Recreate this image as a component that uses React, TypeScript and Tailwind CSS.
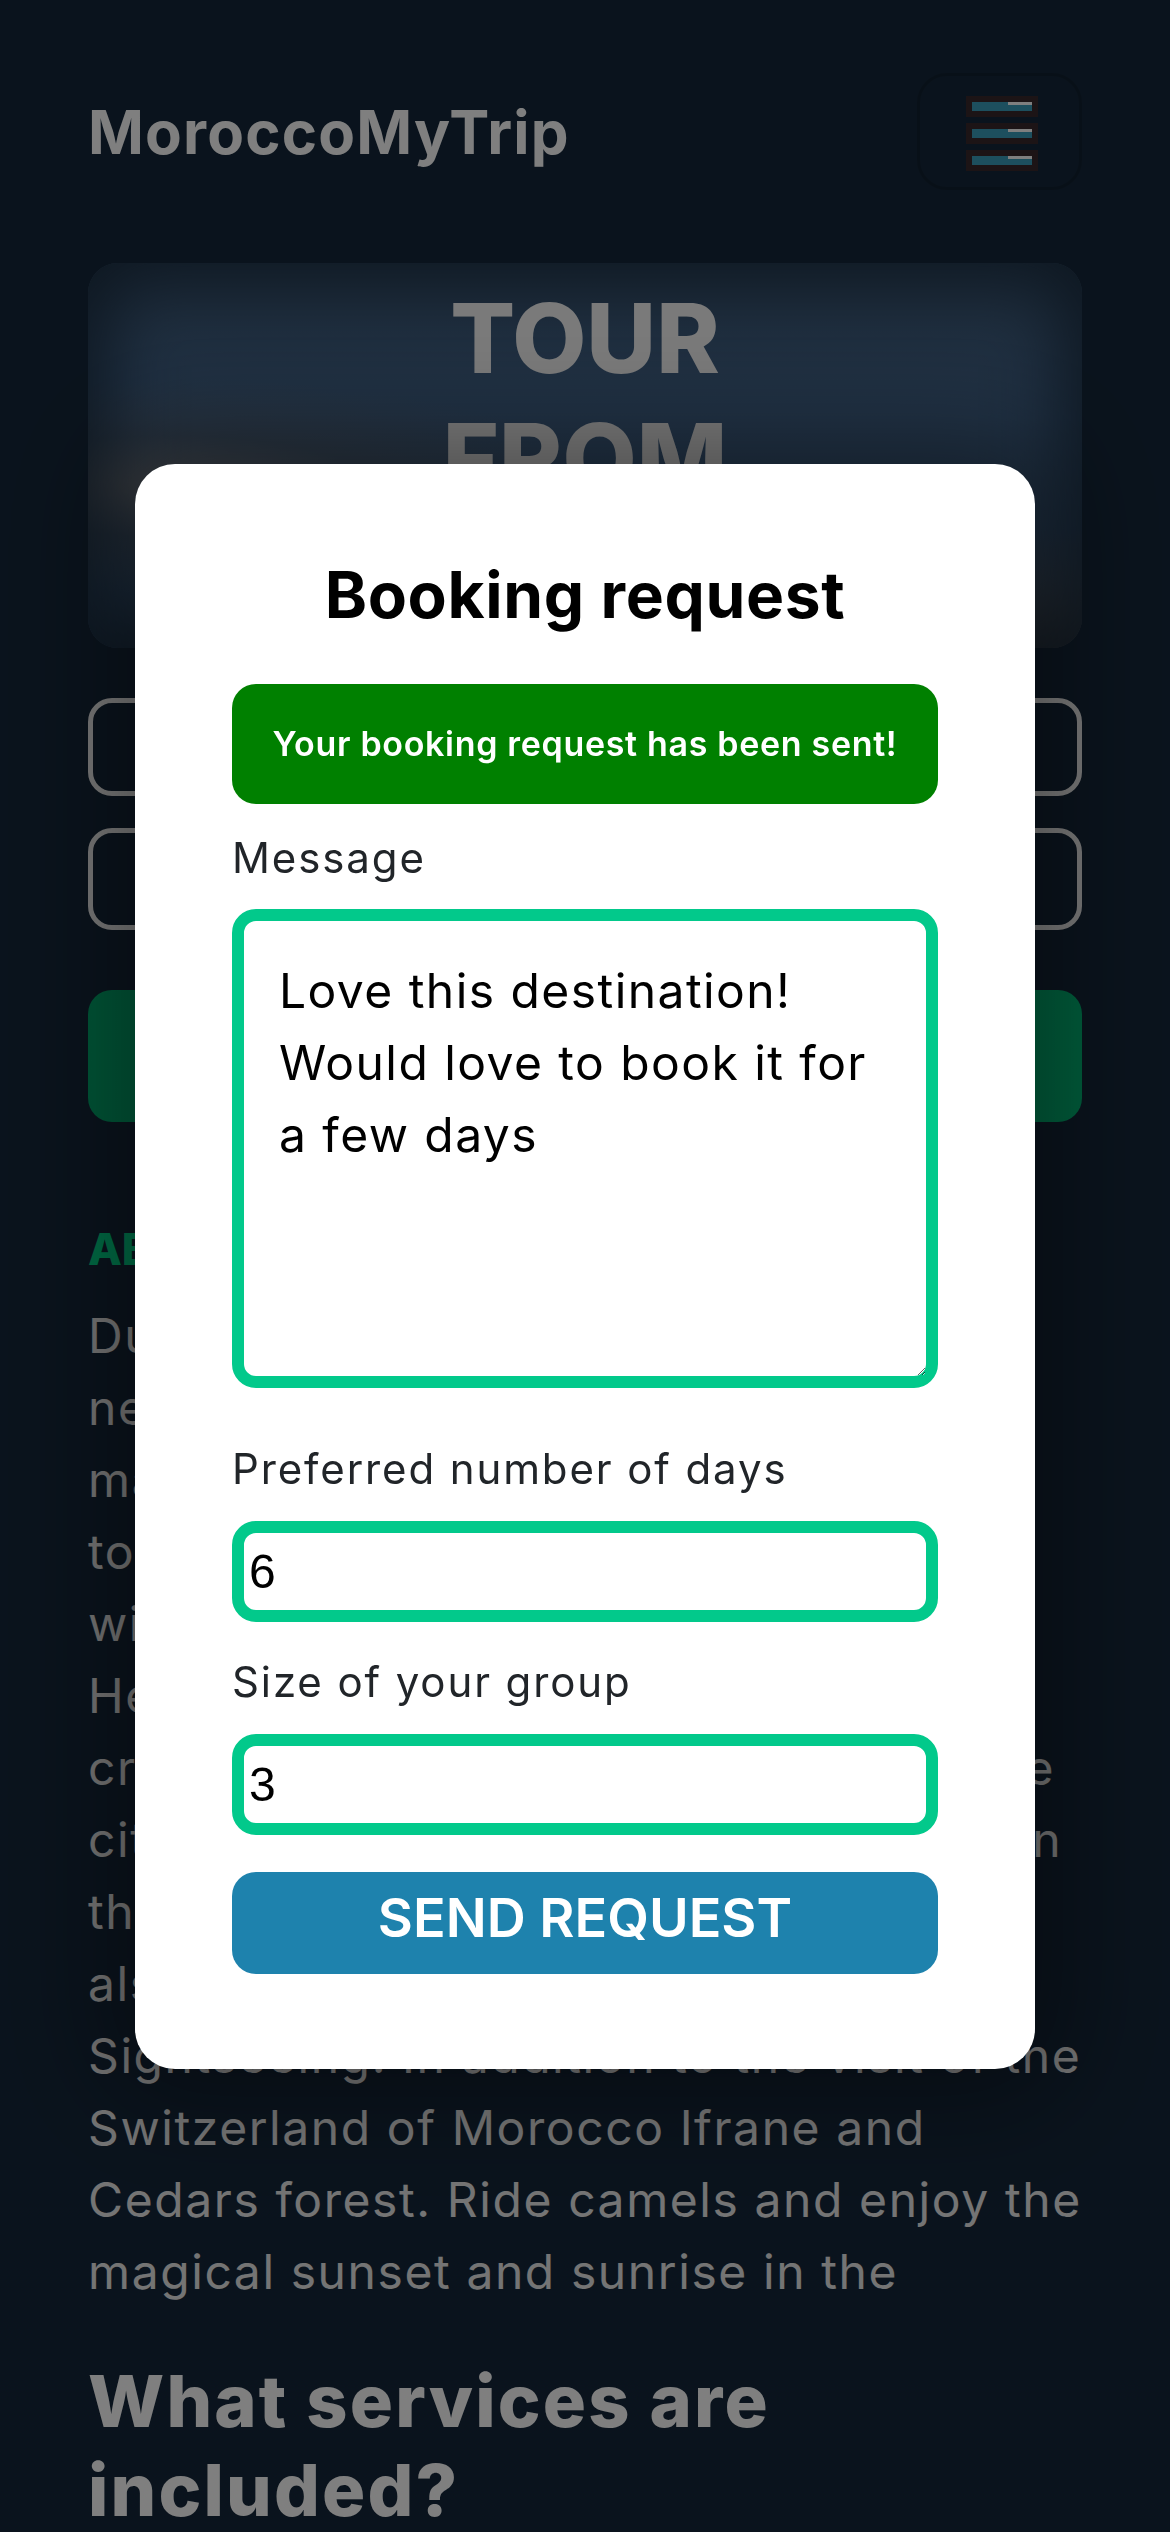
import { useState } from "react";

const aboutLines = [
  "During this 4 days tour from Fes to the",
  "new Marrakech, you will discover the",
  "magnificent dunes of Merzouga, and",
  "to spend a night in a Berber camp",
  "with a memorable starry sky.",
  "Head to Ouarzazate and the Atlas",
  "crossing road via Todra Gorges, see the",
  "city of Ait Ben Haddou and its Kasbah in",
  "the valley of the roses. You will",
  "also enjoy the desert and Marrakech",
  "Sightseeing. In addition to the visit of the",
  "Switzerland of Morocco Ifrane and",
  "Cedars forest. Ride camels and enjoy the",
  "magical sunset and sunrise in the",
];

function MenuIcon() {
  return (
    <svg width="72" height="75" viewBox="0 0 72 75">
      {[0, 27, 54].map((y) => (
        <g key={y}>
          <rect x="0" y={y} width="72" height="21" fill="#38282c" />
          <rect x="6" y={y + 6} width="60" height="9" fill="#3a9ebc" />
          <rect x="42" y={y + 6} width="24" height="3" fill="#ffffff" />
        </g>
      ))}
    </svg>
  );
}

export default function App() {
  const [message, setMessage] = useState("Love this destination! Would love to book it for a few days");
  const [days, setDays] = useState("6");
  const [group, setGroup] = useState("3");

  return (
    <div className="min-h-screen bg-[#15273a] font-['Inter',sans-serif] text-white">
      <div className="px-[88px]">
        {/* Header */}
        <header className="flex items-center justify-between pt-[73px]">
          <span className="text-[60px] leading-[72px] font-bold tracking-[0.02em]">MoroccoMyTrip</span>
          <button className="w-[165px] h-[117px] rounded-[30px] border-[3px] border-black/15 flex items-center justify-center pl-[5px] pt-[4px]">
            <MenuIcon />
          </button>
        </header>

        {/* Hero */}
        <section className="mt-[73px] h-[385px] rounded-[30px] overflow-hidden bg-[radial-gradient(ellipse_at_8%_58%,#7c828b_0%,rgba(90,100,112,0.5)_16%,transparent_34%),radial-gradient(ellipse_at_100%_100%,#5a5d63_0%,transparent_22%),linear-gradient(180deg,#3c5876_0%,#42648a_40%,#3a5878_100%)] shadow-[inset_0_0_70px_20px_rgba(22,40,58,0.85)]">
          <h1 className="mx-auto w-[330px] pt-[15px] text-center text-[96px] leading-[120px] font-extrabold text-[#f5f5f5]">
            TOUR FROM FES TO MARRAKECH
          </h1>
        </section>

        {/* Booking form behind the dialog */}
        <div className="mt-[50px] h-[98px] rounded-[24px] border-[5px] border-[#f2f2f2]" />
        <div className="mt-[32px] h-[102px] rounded-[24px] border-[5px] border-[#f2f2f2]" />
        <div className="mt-[60px] h-[132px] rounded-[24px] bg-[linear-gradient(90deg,#00aa6e,#00b876)]" />

        {/* About */}
        <h2 className="mt-[97px] text-[44px] leading-[60px] font-extrabold text-[#00d68a]">ABOUT THIS TOUR</h2>
        <p className="mt-[21px] text-[48px] leading-[72px] tracking-[0.033em] text-[#e9e9e9]">
          {aboutLines.map((line) => (
            <span key={line} className="block whitespace-nowrap">
              {line}
            </span>
          ))}
        </p>

        <h2 className="mt-[48px] max-w-[820px] text-[72px] leading-[89px] font-extrabold tracking-[0.03em] text-white">
          What services are included?
        </h2>
      </div>

      {/* Dialog */}
      <div className="fixed inset-0 bg-black/50 flex items-center justify-center">
        <div className="w-[900px] bg-white rounded-[40px] px-[97px] pt-[93px] pb-[95px] shadow-[0_0_100px_30px_rgba(0,0,0,0.35)]">
          <h3 className="text-center text-[64px] leading-[76px] font-bold tracking-[0.01em] text-black">Booking request</h3>

          <div className="mt-[51px] h-[120px] rounded-[24px] bg-[#008000] flex items-center justify-center">
            <span className="text-[34px] font-semibold tracking-[0.02em] text-white">Your booking request has been sent!</span>
          </div>

          <label className="block mt-[24px] text-[42px] leading-[60px] tracking-[0.045em] text-[#212529]">Message</label>
          <textarea
            value={message}
            onChange={(e) => setMessage(e.target.value)}
            className="block mt-[21px] w-full h-[479px] rounded-[24px] border-[12px] border-[#02c98b] px-[35px] py-[34px] text-[48px] leading-[72px] tracking-[0.03em] text-black outline-none"
          />

          <label className="block mt-[51px] text-[42px] leading-[60px] tracking-[0.045em] text-[#212529]">
            Preferred number of days
          </label>
          <input
            value={days}
            onChange={(e) => setDays(e.target.value)}
            className="block mt-[22px] w-full h-[101px] rounded-[24px] border-[12px] border-[#02c98b] px-[5px] font-['Liberation_Sans',Arial,sans-serif] text-[48px] text-black outline-none"
          />

          <label className="block mt-[30px] text-[42px] leading-[60px] tracking-[0.045em] text-[#212529]">
            Size of your group
          </label>
          <input
            value={group}
            onChange={(e) => setGroup(e.target.value)}
            className="block mt-[22px] w-full h-[101px] rounded-[24px] border-[12px] border-[#02c98b] px-[5px] font-['Liberation_Sans',Arial,sans-serif] text-[48px] text-black outline-none"
          />

          <button className="mt-[37px] w-full h-[102px] rounded-[24px] bg-[#1e82ad] flex items-center justify-center pb-[10px] text-[54px] font-semibold text-white">
            SEND REQUEST
          </button>
        </div>
      </div>
    </div>
  );
}
